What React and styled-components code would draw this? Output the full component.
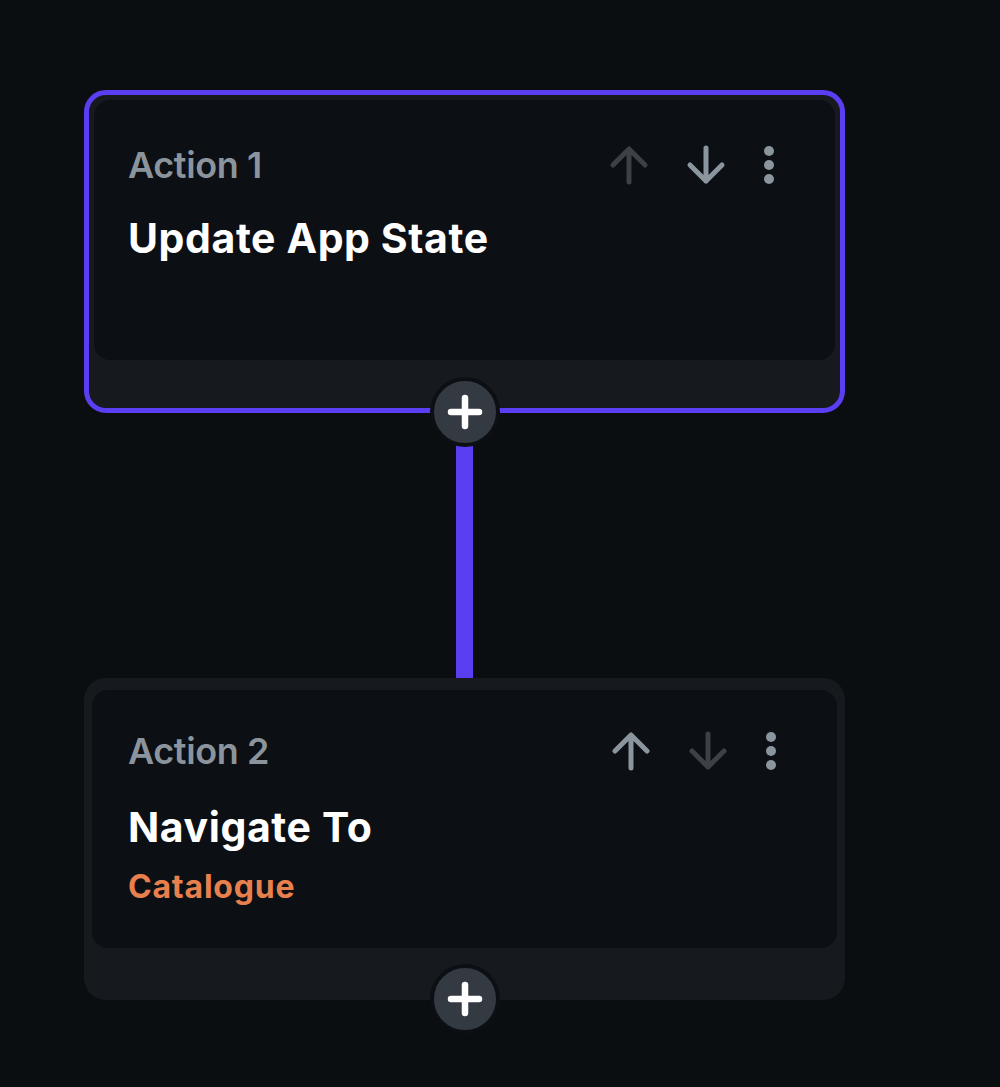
import React from "react";
import styled, { createGlobalStyle } from "styled-components";

const GlobalStyle = createGlobalStyle`
  html, body {
    margin: 0;
    padding: 0;
    background: #0b0e11;
  }
  body {
    font-family: Inter, "Noto Sans", sans-serif;
    -webkit-font-smoothing: antialiased;
  }
`;

const Page = styled.div`
  min-height: 1087px;
  box-sizing: border-box;
  padding: 90px 0 0 84px;
  display: flex;
  flex-direction: column;
  align-items: flex-start;
`;

const Flow = styled.div`
  width: 761px;
  display: flex;
  flex-direction: column;
  align-items: center;
`;

const Card = styled.div`
  position: relative;
  width: 100%;
  box-sizing: border-box;
  border: 5px solid ${(p) => (p.$selected ? "#5a3ef2" : "#161a1f")};
  border-radius: 22px;
  background: #161a1f;
  padding: ${(p) => (p.$selected ? "5px 5px 48px" : "7px 3px 47px")};
`;

const Inner = styled.div`
  box-sizing: border-box;
  height: ${(p) => p.$h}px;
  background: #0c0f13;
  border-radius: 16px;
  padding: ${(p) => p.$top}px 60px 0 ${(p) => p.$left}px;
  display: flex;
  flex-direction: column;
`;

const Header = styled.div`
  display: flex;
  align-items: center;
  justify-content: space-between;
  height: 44px;
`;

const Label = styled.div`
  font-size: 36px;
  font-weight: 600;
  letter-spacing: -0.4px;
  color: #8b949d;
  line-height: 44px;
`;

const Title = styled.div`
  margin-top: ${(p) => p.$gap}px;
  font-size: 41px;
  font-weight: 700;
  letter-spacing: 0.6px;
  color: #ffffff;
  line-height: 48px;
`;

const Sub = styled.div`
  margin-top: 17px;
  font-size: 32px;
  font-weight: 700;
  letter-spacing: 0.8px;
  color: #e8804e;
  line-height: 38px;
`;

const Tools = styled.div`
  display: flex;
  align-items: center;
  gap: 37px;
`;

const IconBtn = styled.svg`
  display: block;
  color: ${(p) => (p.$disabled ? "#3b4147" : "#8b959e")};
`;

const AddButton = styled.button`
  position: absolute;
  left: 50%;
  bottom: -39px;
  transform: translateX(-50%);
  width: 70px;
  height: 70px;
  box-sizing: border-box;
  border-radius: 50%;
  border: 4px solid #0c0f13;
  background: #343a42;
  display: flex;
  align-items: center;
  justify-content: center;
  padding: 0;
  cursor: pointer;
`;

const Connector = styled.div`
  width: 17px;
  height: 265px;
  background: #5a3ef2;
`;

const Arrow = ({ dir, disabled }) => (
  <IconBtn $disabled={disabled} width="40" height="40" viewBox="0 0 40 40">
    <g
      transform={dir === "down" ? "rotate(180 20 20)" : undefined}
      fill="none"
      stroke="currentColor"
      strokeWidth="5"
      strokeLinecap="round"
      strokeLinejoin="round"
    >
      <path d="M20 37V4M4 20L20 4L36 20" />
    </g>
  </IconBtn>
);

const Dots = () => (
  <IconBtn width="12" height="40" viewBox="0 0 12 40">
    <g fill="currentColor">
      <circle cx="6" cy="6" r="5" />
      <circle cx="6" cy="20" r="5" />
      <circle cx="6" cy="34" r="5" />
    </g>
  </IconBtn>
);

const Plus = () => (
  <svg width="36" height="36" viewBox="0 0 36 36">
    <path
      d="M18 4V32M4 18H32"
      stroke="#ffffff"
      strokeWidth="6.5"
      strokeLinecap="round"
    />
  </svg>
);

const actions = [
  { id: 1, title: "Update App State", selected: true, canUp: false, canDown: true },
  { id: 2, title: "Navigate To", sub: "Catalogue", selected: false, canUp: true, canDown: false },
];

function ActionCard({ action }) {
  return (
    <Card $selected={action.selected}>
      <Inner
        $h={action.selected ? 260 : 258}
        $top={action.selected ? 43 : 39}
        $left={action.selected ? 34 : 36}
      >
        <Header>
          <Label>Action {action.id}</Label>
          <Tools>
            <Arrow dir="up" disabled={!action.canUp} />
            <Arrow dir="down" disabled={!action.canDown} />
            <Dots />
          </Tools>
        </Header>
        <Title $gap={action.selected ? 27 : 30}>{action.title}</Title>
        {action.sub && <Sub>{action.sub}</Sub>}
      </Inner>
      <AddButton aria-label="Add action">
        <Plus />
      </AddButton>
    </Card>
  );
}

export default function App() {
  return (
    <>
      <GlobalStyle />
      <Page>
        <Flow>
          {actions.map((a, i) => (
            <React.Fragment key={a.id}>
              {i > 0 && <Connector />}
              <ActionCard action={a} />
            </React.Fragment>
          ))}
        </Flow>
      </Page>
    </>
  );
}
